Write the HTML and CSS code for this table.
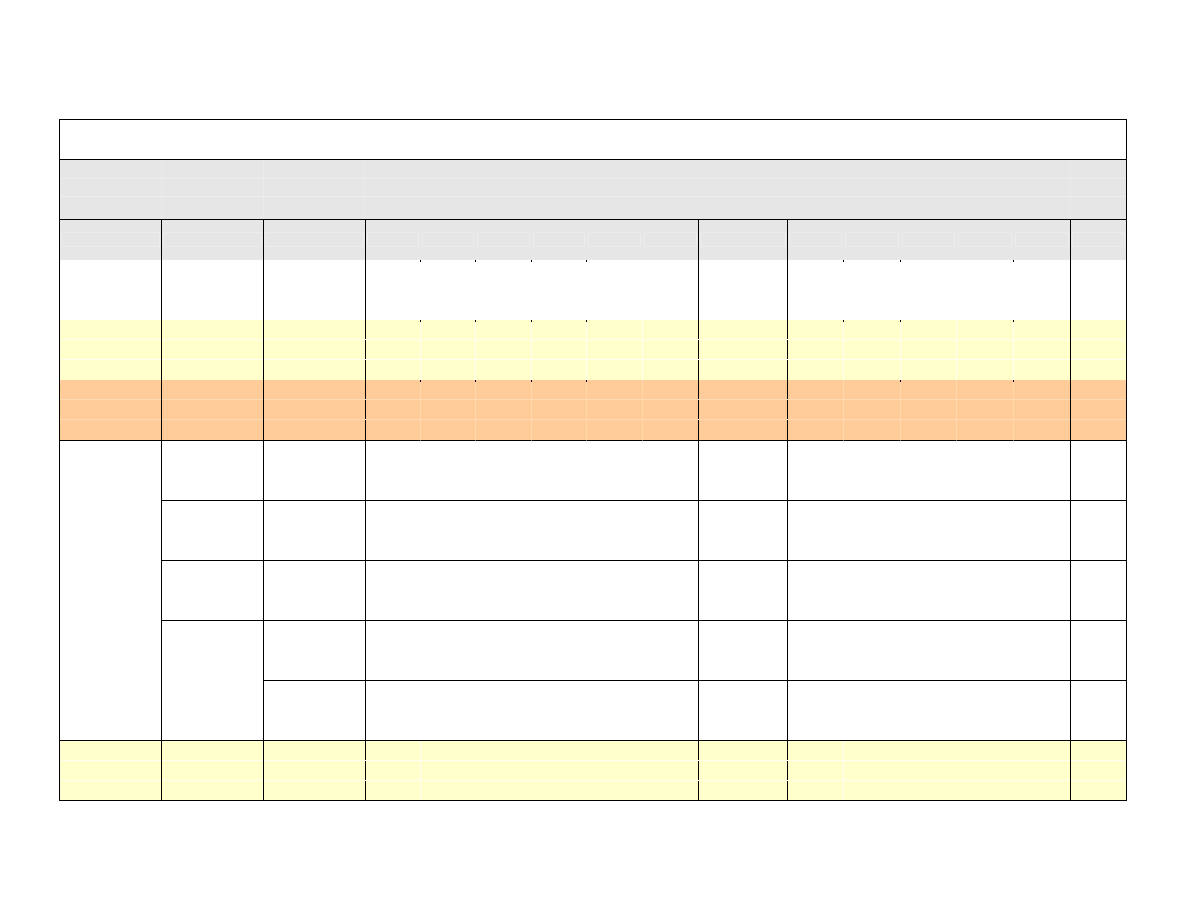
FILE: index.html
```html
<!DOCTYPE html>
<html>
<head>
<meta charset="utf-8">
<title>Sheet</title>
<link rel="stylesheet" href="styles.css">
</head>
<body>
<div class="sheet">
  <!-- title row -->
  <div class="cell full bb"></div>
  <!-- grey band -->
  <div class="cell full bb grey band"></div>

  <!-- header row -->
  <div class="cell grey hdr"></div>
  <div class="cell grey hdr"></div>
  <div class="cell grey hdr"></div>
  <div class="cell grey hdr sub"></div>
  <div class="cell grey hdr sub"></div>
  <div class="cell grey hdr sub"></div>
  <div class="cell grey hdr sub"></div>
  <div class="cell grey hdr sub"></div>
  <div class="cell grey hdr"></div>
  <div class="cell grey hdr"></div>
  <div class="cell grey hdr sub"></div>
  <div class="cell grey hdr sub"></div>
  <div class="cell grey hdr sub"></div>
  <div class="cell grey hdr sub"></div>
  <div class="cell grey hdr"></div>
  <div class="cell grey hdr"></div>

  <!-- white row -->
  <div class="cell"></div>
  <div class="cell"></div>
  <div class="cell"></div>
  <div class="cell sub tick"></div>
  <div class="cell sub tick"></div>
  <div class="cell sub tick"></div>
  <div class="cell sub tick"></div>
  <div class="cell sub"></div>
  <div class="cell"></div>
  <div class="cell"></div>
  <div class="cell sub tick"></div>
  <div class="cell sub tick"></div>
  <div class="cell sub"></div>
  <div class="cell sub tick"></div>
  <div class="cell"></div>
  <div class="cell"></div>

  <!-- yellow row -->
  <div class="cell yel"></div>
  <div class="cell yel"></div>
  <div class="cell yel brk"></div>
  <div class="cell yel sub tick"></div>
  <div class="cell yel sub tick"></div>
  <div class="cell yel sub tick"></div>
  <div class="cell yel sub tick"></div>
  <div class="cell yel sub"></div>
  <div class="cell yel brk"></div>
  <div class="cell yel brk"></div>
  <div class="cell yel sub tick"></div>
  <div class="cell yel sub tick"></div>
  <div class="cell yel sub"></div>
  <div class="cell yel sub tick"></div>
  <div class="cell yel"></div>
  <div class="cell yel"></div>

  <!-- orange row -->
  <div class="cell org bb"></div>
  <div class="cell org bb"></div>
  <div class="cell org bb brk"></div>
  <div class="cell org bb sub tick"></div>
  <div class="cell org bb sub tick"></div>
  <div class="cell org bb sub tick"></div>
  <div class="cell org bb sub tick"></div>
  <div class="cell org bb sub"></div>
  <div class="cell org bb brk"></div>
  <div class="cell org bb brk"></div>
  <div class="cell org bb sub"></div>
  <div class="cell org bb sub tick"></div>
  <div class="cell org bb sub"></div>
  <div class="cell org bb sub tick"></div>
  <div class="cell org bb"></div>
  <div class="cell org bb"></div>

  <!-- lower block -->
  <div class="cell bb merge-a"></div>
  <div class="cell bb merge-b"></div>

  <!-- row 7 -->
  <div class="cell bb"></div>
  <div class="cell bb"></div>
  <div class="cell bb span6"></div>
  <div class="cell bb"></div>
  <div class="cell bb span5"></div>
  <div class="cell bb"></div>
  <!-- row 8 -->
  <div class="cell bb"></div>
  <div class="cell bb"></div>
  <div class="cell bb span6"></div>
  <div class="cell bb"></div>
  <div class="cell bb span5"></div>
  <div class="cell bb"></div>
  <!-- row 9 -->
  <div class="cell bb"></div>
  <div class="cell bb"></div>
  <div class="cell bb span6"></div>
  <div class="cell bb"></div>
  <div class="cell bb span5"></div>
  <div class="cell bb"></div>
  <!-- row 10 -->
  <div class="cell bb"></div>
  <div class="cell bb span6"></div>
  <div class="cell bb"></div>
  <div class="cell bb span5"></div>
  <div class="cell bb"></div>
  <!-- row 11 -->
  <div class="cell bb"></div>
  <div class="cell bb span6"></div>
  <div class="cell bb"></div>
  <div class="cell bb span5"></div>
  <div class="cell bb"></div>

  <!-- row 12 yellow -->
  <div class="cell bb yel"></div>
  <div class="cell bb yel"></div>
  <div class="cell bb yel brk"></div>
  <div class="cell bb yel brk span6 cols4"></div>
  <div class="cell bb yel brk"></div>
  <div class="cell bb yel span5 cols6"></div>
  <div class="cell bb yel"></div>
</div>
</body>
</html>
```

FILE: styles.css
```css
html, body {
  margin: 0;
  padding: 0;
  background: #ffffff;
  font-family: "Liberation Sans", Arial, sans-serif;
}

.sheet {
  display: grid;
  grid-template-columns: 102px 102px 102px 55px 55px 56px 55px 56px 56px 89px 56px 57px 56px 57px 57px 56px;
  grid-template-rows: 40px 60px 40px 60px 60px 61px repeat(6, 60px);
  width: max-content;
  margin: 119px 0 0 59px;
  border-left: 1px solid #000;
  border-top: 1px solid #000;
}

.cell {
  position: relative;
  box-sizing: border-box;
  border-right: 1px solid #000;
  background: #ffffff;
}

.bb {
  border-bottom: 1px solid #000;
}

.full {
  grid-column: 1 / -1;
}

.span6 {
  grid-column: span 6;
}

.span5 {
  grid-column: span 5;
}

.merge-a {
  grid-row: 7 / 12;
}

.merge-b {
  grid-row: 10 / 12;
}

.sub {
  border-right-color: transparent;
}

.yel.sub {
  border-right-color: #fffff2;
}

.org.sub {
  border-right-color: #ffd8ae;
}

.tick::before {
  content: "";
  position: absolute;
  top: 0;
  right: -1px;
  width: 1px;
  height: 2px;
  background: #000;
  z-index: 2;
}

/* grey header band */
.grey {
  background: #e6e6e6;
}

.band {
  background-color: #e6e6e6;
  background-image:
    linear-gradient(#ededed, #ededed),
    linear-gradient(#ededed, #ededed),
    linear-gradient(#ebebeb, #ebebeb),
    linear-gradient(#ebebeb, #ebebeb),
    linear-gradient(#ebebeb, #ebebeb),
    linear-gradient(#ebebeb, #ebebeb);
  background-size: 100% 1px, 100% 1px, 1px 100%, 1px 100%, 1px 100%, 1px 100%;
  background-position: 0 18px, 0 36px, 101px 0, 203px 0, 304px 0, 1010px 0;
  background-repeat: no-repeat;
}

.hdr::after {
  content: "";
  position: absolute;
  left: 1px;
  right: 1px;
  top: 12px;
  height: 15px;
  box-sizing: border-box;
  border: 1px solid #ececec;
}

/* coloured rows with light sub-row gridlines */
.yel {
  background: #ffffcc;
}

.org {
  background: #ffcc99;
}

.yel::after,
.org::after {
  content: "";
  position: absolute;
  left: 0;
  right: 0;
  top: 0;
  bottom: 0;
  background-image: linear-gradient(var(--line), var(--line)), linear-gradient(var(--line), var(--line));
  background-size: 100% 1px, 100% 1px;
  background-position: 0 19px, 0 39px;
  background-repeat: no-repeat;
  z-index: 1;
}

.yel {
  --line: #fffff0;
}

.org {
  --line: #ffdab2;
}

.brk::after {
  right: -1px;
}

.cols4 {
  background-image: linear-gradient(#fffff2, #fffff2);
  background-size: 1px 100%;
  background-position: 54px 0;
  background-repeat: no-repeat;
}

.cols6 {
  background-image: linear-gradient(#fffff2, #fffff2);
  background-size: 1px 100%;
  background-position: 55px 0;
  background-repeat: no-repeat;
}
```
